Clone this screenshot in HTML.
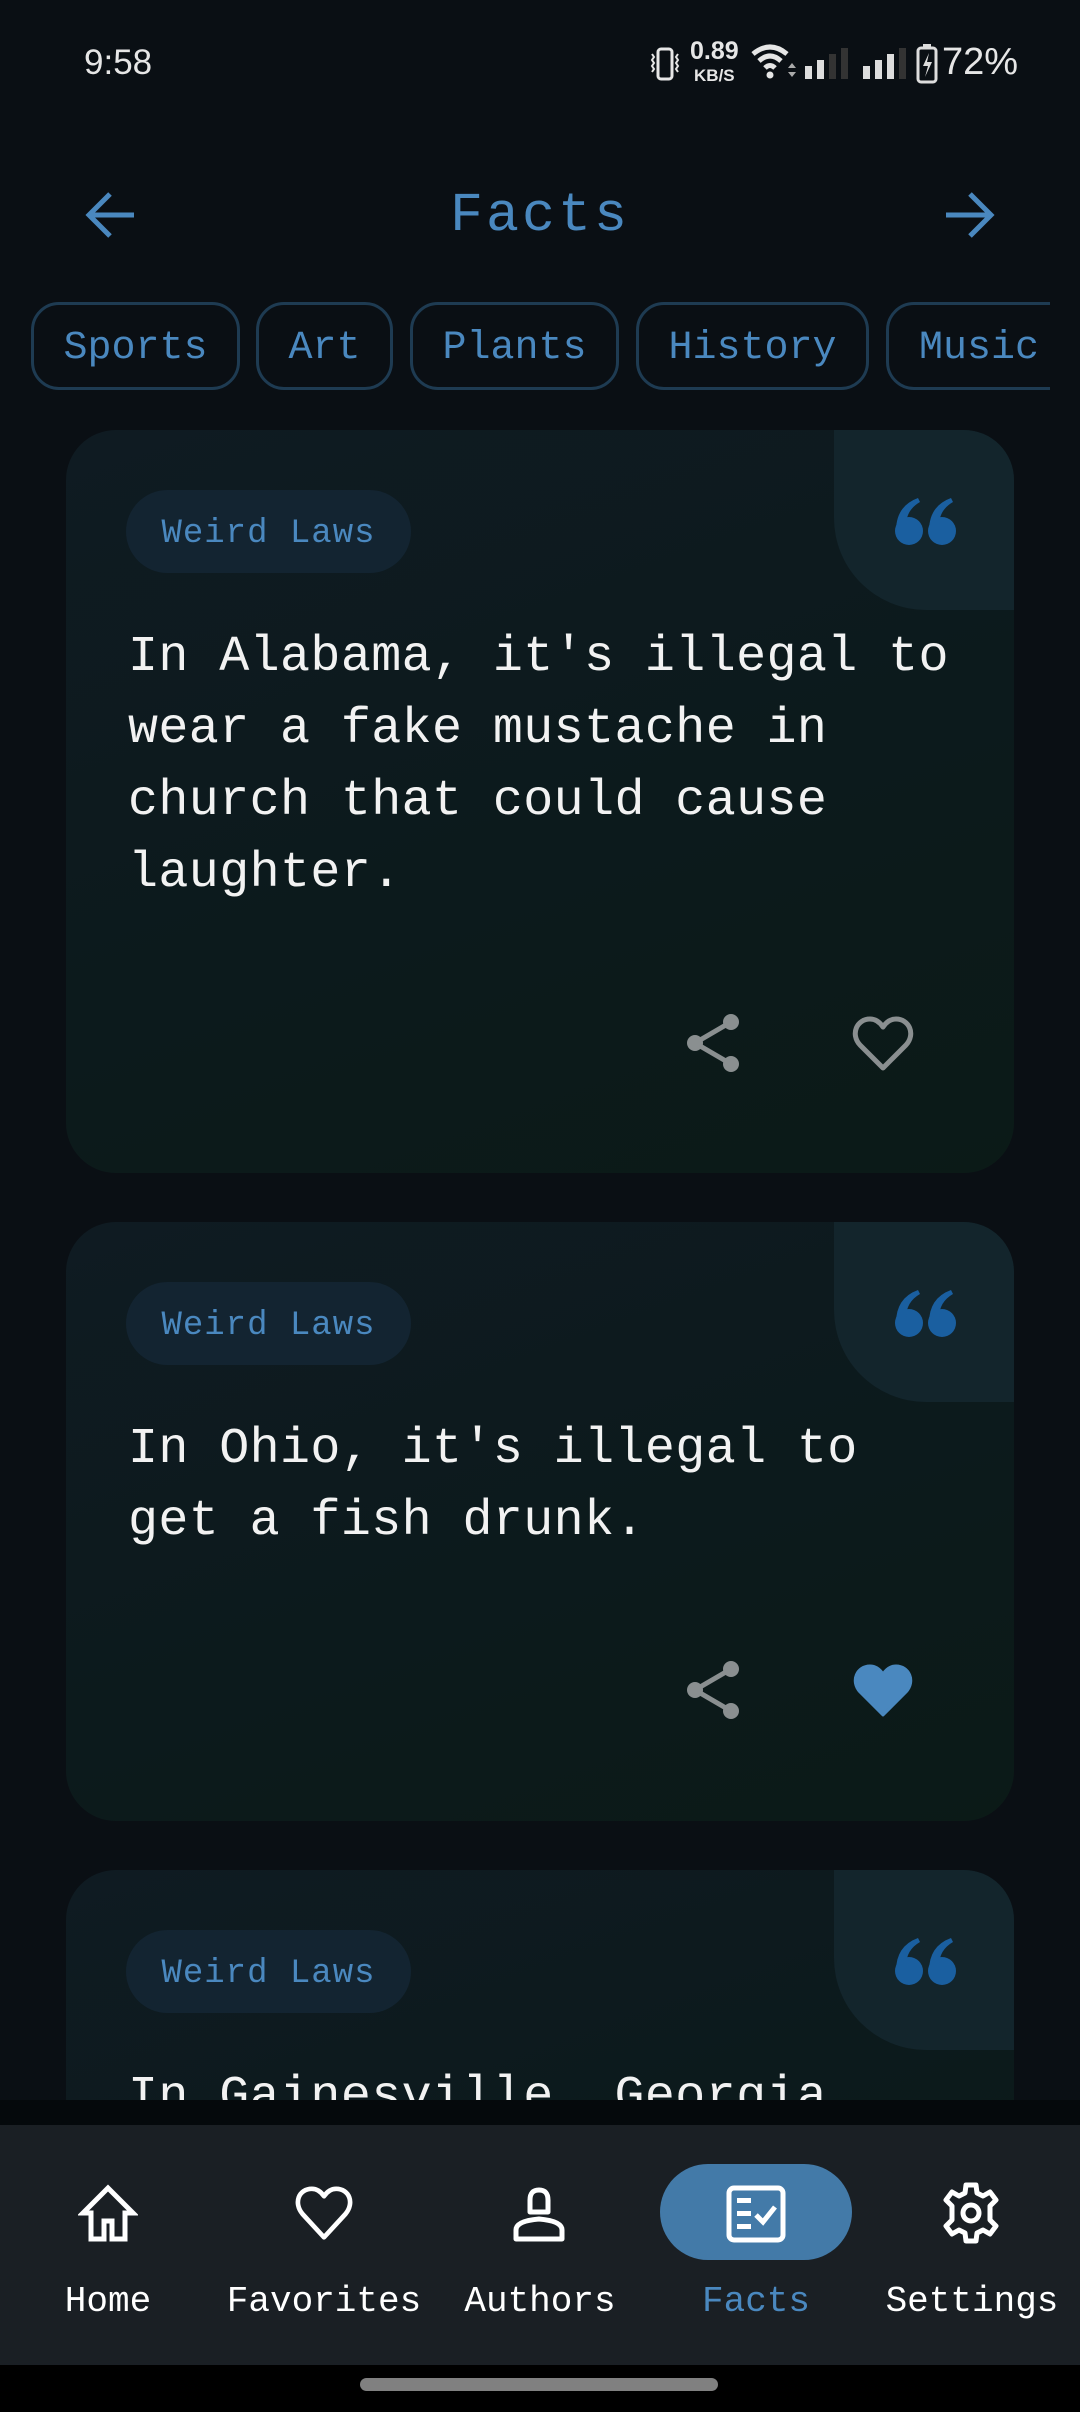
<!DOCTYPE html>
<html><head><meta charset="utf-8">
<style>
*{margin:0;padding:0;box-sizing:border-box}
html,body{width:1080px;height:2412px;overflow:hidden;background:#0a0f14;font-family:"Liberation Mono",monospace}
.abs{position:absolute}
#status{position:absolute;left:0;top:0;width:1080px;height:110px;color:#e6e6e6;font-family:"Liberation Sans",sans-serif}
.title{position:absolute;top:184px;left:0;width:1080px;text-align:center;color:#4a88bf;font-size:55px;letter-spacing:3px}
.chip{position:absolute;top:302px;height:88px;border:3px solid #1e3b52;border-radius:28px;color:#4a88bf;font-size:40px;line-height:88px;text-align:center}
.card{position:absolute;left:66px;width:948px;border-radius:50px;overflow:hidden;background:linear-gradient(160deg,#0f1b22 0%,#0c1a1c 55%,#0b1a17 100%)}
.corner{position:absolute;right:0;top:0;width:180px;height:180px;background:#13252c;border-bottom-left-radius:92px}
.q{position:absolute;right:56px;top:66px}
.tag{position:absolute;left:60px;top:60px;width:285px;height:83px;border-radius:42px;background:#132431;color:#4a88bf;font-size:34px;line-height:89px;text-align:center;letter-spacing:1px}
.txt{position:absolute;left:62px;top:192px;width:852px;color:#f2f2f2;font-size:50px;line-height:72px;letter-spacing:0.4px}
.ic{position:absolute}
#nav{position:absolute;left:0;top:2125px;width:1080px;height:240px;background:#1a1f24}
.lbl{position:absolute;top:2281px;width:216px;text-align:center;color:#fff;font-size:36px}
</style></head><body>
<div id="status">
 <div class="abs" style="left:84px;top:43px;font-size:35px">9:58</div>
 <svg class="abs" style="left:648px;top:46px" width="34" height="36" viewBox="0 0 34 36"><rect x="10" y="3" width="14" height="30" rx="3" fill="none" stroke="#e6e6e6" stroke-width="3"/><path d="M4 8 l2 3 -2 3 2 3 -2 3 2 3 -2 3M30 8 l-2 3 2 3 -2 3 2 3 -2 3 2 3" stroke="#e6e6e6" stroke-width="2" fill="none"/></svg>
 <div class="abs" style="left:690px;top:40px;font-size:25px;font-weight:bold;line-height:22px;text-align:center">0.89<br><span style="font-size:17px">KB/S</span></div>
 <svg class="abs" style="left:750px;top:42px" width="48" height="40" viewBox="0 0 48 40"><path d="M3 12 Q20 -2 37 12" stroke="#e6e6e6" stroke-width="5" fill="none"/><path d="M9 19 Q20 9 31 19" stroke="#e6e6e6" stroke-width="5" fill="none"/><path d="M15 26 Q20 21 25 26" stroke="#e6e6e6" stroke-width="5" fill="none"/><circle cx="20" cy="33" r="3.5" fill="#e6e6e6"/><path d="M38 26 l4 -5 4 5zM38 30 l4 5 4 -5z" fill="#aaa"/></svg>
 <svg class="abs" style="left:805px;top:48px" width="50" height="32"><rect x="0" y="18" width="7" height="13" fill="#ddd"/><rect x="12" y="12" width="7" height="19" fill="#ddd"/><rect x="24" y="6" width="7" height="25" fill="#333"/><rect x="36" y="0" width="7" height="31" fill="#333"/></svg>
 <svg class="abs" style="left:863px;top:48px" width="50" height="32"><rect x="0" y="18" width="7" height="13" fill="#ddd"/><rect x="12" y="12" width="7" height="19" fill="#ddd"/><rect x="24" y="6" width="7" height="25" fill="#ddd"/><rect x="36" y="0" width="7" height="31" fill="#333"/></svg>
 <svg class="abs" style="left:916px;top:44px" width="22" height="40"><rect x="7" y="0" width="8" height="3" fill="#ddd"/><rect x="2" y="4" width="18" height="34" rx="3" fill="none" stroke="#ddd" stroke-width="3"/><path d="M13 9 L7 22 H12 L9 33 L16 18 H11z" fill="#ddd"/></svg>
 <div class="abs" style="left:942px;top:41px;font-size:38px">72%</div>
</div>
<svg class="abs" style="left:84px;top:190px" width="54" height="50" viewBox="0 0 54 50"><path d="M50 25 H6 M26 4 L5 25 L26 46" stroke="#4a88bf" stroke-width="5" fill="none"/></svg>
<svg class="abs" style="left:942px;top:190px" width="54" height="50" viewBox="0 0 54 50"><path d="M4 25 H48 M28 4 L49 25 L28 46" stroke="#4a88bf" stroke-width="5" fill="none"/></svg>
<div class="title">Facts</div>
<div class="chip" style="left:31px;width:209px">Sports</div>
<div class="chip" style="left:256px;width:137px">Art</div>
<div class="chip" style="left:410px;width:209px">Plants</div>
<div class="chip" style="left:636px;width:233px">History</div>
<div style="position:absolute;left:0;top:290px;width:1050px;height:110px;overflow:hidden"><div class="chip" style="left:886px;width:220px;top:12px;text-align:left;padding-left:30px">Music</div></div>

<div style="position:absolute;left:0;top:400px;width:1080px;height:1700px;overflow:hidden">
<div class="card" style="top:30px;height:743px">
 <div class="corner"></div>
 <svg class="q" width="64" height="50" viewBox="0 0 64 50"><g fill="#1a5fa0"><circle cx="15" cy="35" r="14"/><path d="M2 35 Q2 10 24 2 L26 6 Q12 14 12 30z"/><circle cx="48" cy="35" r="14"/><path d="M35 35 Q35 10 57 2 L59 6 Q45 14 45 30z"/></g></svg>
 <div class="tag">Weird Laws</div>
 <div class="txt">In Alabama, it's illegal to wear a fake mustache in church that could cause laughter.</div>
 <svg class="ic" style="left:618px;top:582px" width="60" height="62" viewBox="0 0 60 62"><g fill="#8a8f90"><circle cx="47" cy="10" r="8"/><circle cx="11" cy="31" r="8"/><circle cx="47" cy="52" r="8"/></g><path d="M47 10 L11 31 L47 52" stroke="#8a8f90" stroke-width="5" fill="none"/></svg>
 <svg class="ic" style="left:786px;top:586px" width="62" height="56" viewBox="0 0 62 56"><path d="M31 52 L8 29 C-2 18 5 3 18 3 C25 3 29 8 31 11 C33 8 37 3 44 3 C57 3 64 18 54 29z" stroke="#8a8f90" stroke-width="5" fill="none" stroke-linejoin="round"/></svg>
</div>
<div class="card" style="top:822px;height:599px">
 <div class="corner"></div>
 <svg class="q" width="64" height="50" viewBox="0 0 64 50"><g fill="#1a5fa0"><circle cx="15" cy="35" r="14"/><path d="M2 35 Q2 10 24 2 L26 6 Q12 14 12 30z"/><circle cx="48" cy="35" r="14"/><path d="M35 35 Q35 10 57 2 L59 6 Q45 14 45 30z"/></g></svg>
 <div class="tag">Weird Laws</div>
 <div class="txt">In Ohio, it's illegal to<br>get a fish drunk.</div>
 <svg class="ic" style="left:618px;top:437px" width="60" height="62" viewBox="0 0 60 62"><g fill="#8a8f90"><circle cx="47" cy="10" r="8"/><circle cx="11" cy="31" r="8"/><circle cx="47" cy="52" r="8"/></g><path d="M47 10 L11 31 L47 52" stroke="#8a8f90" stroke-width="5" fill="none"/></svg>
 <svg class="ic" style="left:786px;top:441px" width="62" height="56" viewBox="0 0 62 56"><path d="M31 52 L8 29 C-2 18 5 3 18 3 C25 3 29 8 31 11 C33 8 37 3 44 3 C57 3 64 18 54 29z" fill="#4a88bf" stroke="#4a88bf" stroke-width="3" stroke-linejoin="round"/></svg>
</div>
<div class="card" style="top:1470px;height:500px">
 <div class="corner"></div>
 <svg class="q" width="64" height="50" viewBox="0 0 64 50"><g fill="#1a5fa0"><circle cx="15" cy="35" r="14"/><path d="M2 35 Q2 10 24 2 L26 6 Q12 14 12 30z"/><circle cx="48" cy="35" r="14"/><path d="M35 35 Q35 10 57 2 L59 6 Q45 14 45 30z"/></g></svg>
 <div class="tag">Weird Laws</div>
 <div class="txt">In Gainesville, Georgia, it's illegal to eat fried chicken with a fork.</div>
</div>
</div>

<div class="abs" style="left:0;top:2100px;width:1080px;height:25px;background:#05090c"></div>
<div id="nav"></div>
<div class="abs" style="left:660px;top:2164px;width:192px;height:96px;border-radius:48px;background:#437aa8"></div>
<svg class="abs" style="left:78px;top:2184px" width="60" height="58" viewBox="0 0 60 58"><path d="M30 4 L5 29 H13 V55 H26 V37 H34 V55 H47 V29 H55z" stroke="#fff" stroke-width="5" fill="none" stroke-linejoin="miter"/></svg>
<svg class="abs" style="left:295px;top:2186px" width="58" height="56" viewBox="0 0 62 60"><path d="M31 55 L8 30 C-2 18 4 3 18 3 C25 3 29 8 31 11 C33 8 37 3 44 3 C58 3 64 18 54 30z" stroke="#fff" stroke-width="5" fill="none" stroke-linejoin="round"/></svg>
<svg class="abs" style="left:513px;top:2186px" width="52" height="56" viewBox="0 0 52 56"><path d="M17 26 V14 Q17 4 26 4 Q35 4 35 14 V26z" stroke="#fff" stroke-width="5" fill="none" stroke-linejoin="round"/><path d="M3 53 V44 Q3 35 26 33 Q49 35 49 44 V53z" stroke="#fff" stroke-width="5" fill="none" stroke-linejoin="round"/></svg>
<svg class="abs" style="left:725px;top:2185px" width="62" height="58" viewBox="0 0 62 58"><rect x="4" y="3" width="54" height="52" rx="5" stroke="#fff" stroke-width="5" fill="none"/><rect x="12" y="13" width="14" height="5" fill="#fff"/><rect x="12" y="26" width="14" height="5" fill="#fff"/><rect x="12" y="39" width="14" height="5" fill="#fff"/><path d="M31 30 L38 37 L50 22" stroke="#fff" stroke-width="5" fill="none"/></svg>
<svg class="abs" style="left:941px;top:2182px" width="60" height="62" viewBox="0 0 60 62"><path d="M25 3 H35 L36 11 L42 14 L49 10 L55 18 L49 24 V38 L55 44 L49 52 L42 48 L36 51 L35 59 H25 L24 51 L18 48 L11 52 L5 44 L11 38 V24 L5 18 L11 10 L18 14 L24 11z" stroke="#fff" stroke-width="5" fill="none" stroke-linejoin="round"/><circle cx="30" cy="31" r="8" stroke="#fff" stroke-width="5" fill="none"/></svg>
<div class="lbl" style="left:0">Home</div>
<div class="lbl" style="left:216px">Favorites</div>
<div class="lbl" style="left:432px">Authors</div>
<div class="lbl" style="left:648px;color:#4a88bf">Facts</div>
<div class="lbl" style="left:864px">Settings</div>
<div class="abs" style="left:0;top:2365px;width:1080px;height:47px;background:#000"></div>
<div class="abs" style="left:360px;top:2378px;width:358px;height:13px;border-radius:7px;background:#808080"></div>
</body></html>
